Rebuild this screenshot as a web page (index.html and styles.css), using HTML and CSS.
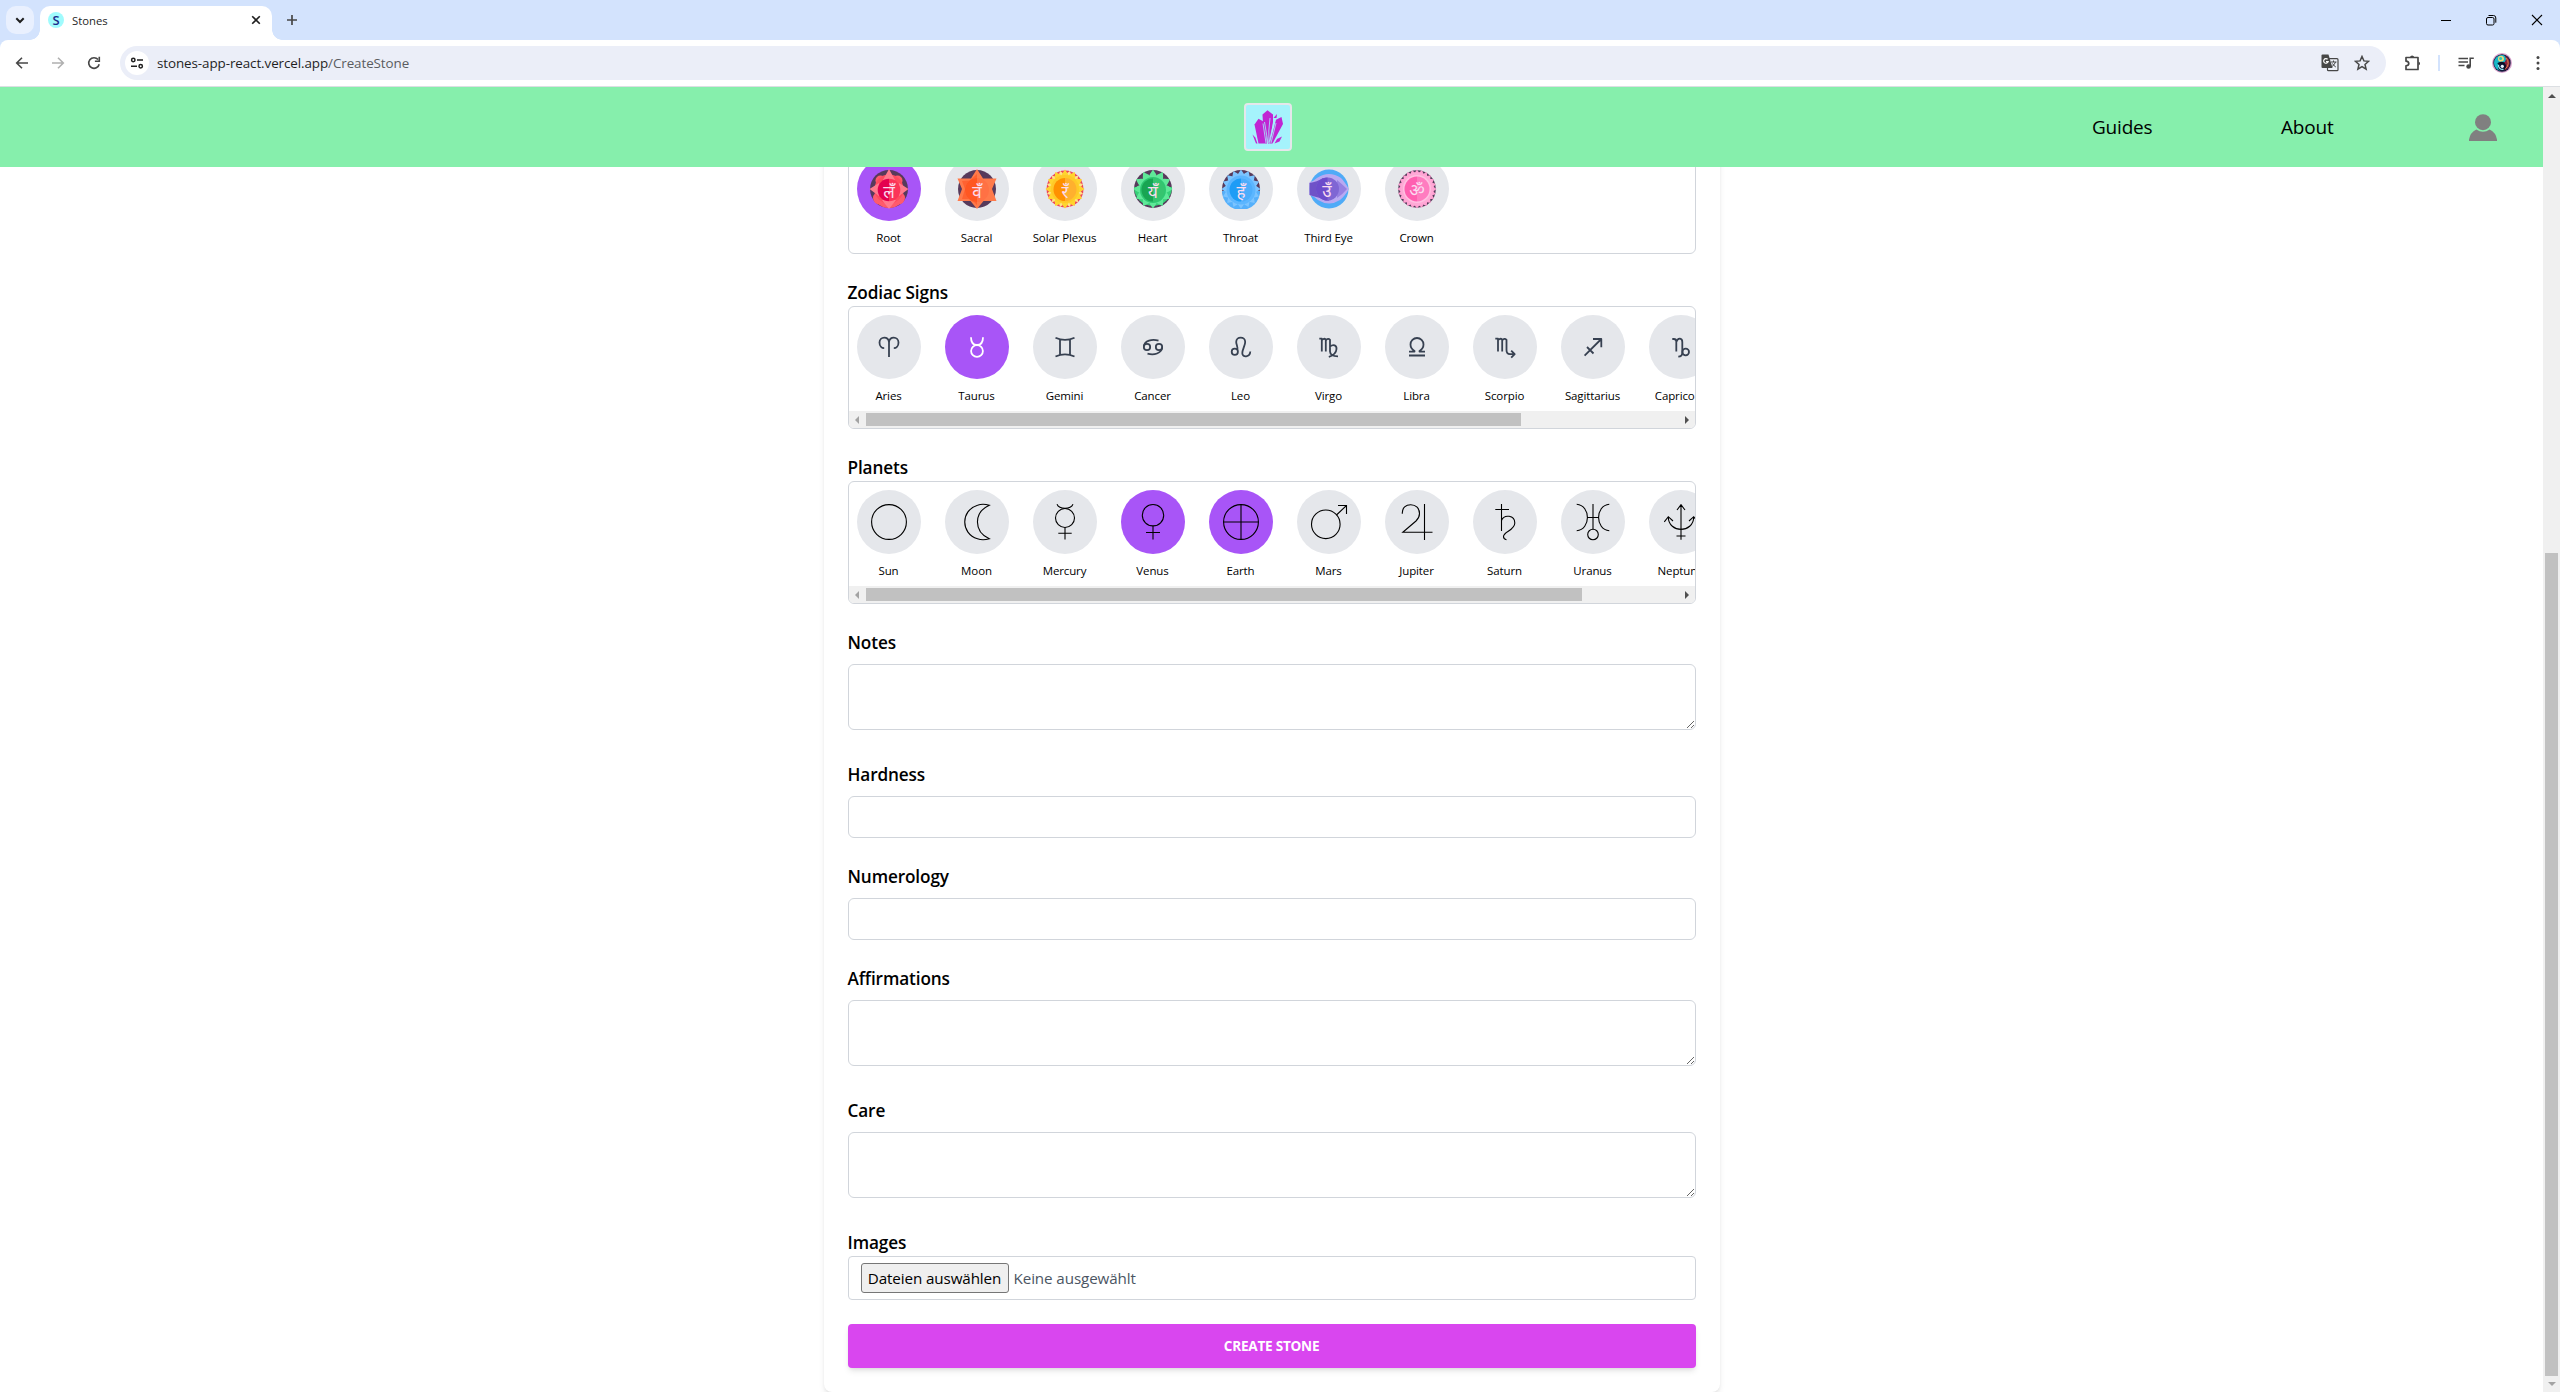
FILE: index.html
```html
<!DOCTYPE html>
<html lang="en">
<head>
<meta charset="utf-8">
<title>Stones</title>
<link rel="stylesheet" href="styles.css">
</head>
<body>
<svg class="defs" aria-hidden="true">
  <defs>
    <path id="petal" d="M20 0.400C22 3.500 24.200 5.500 24.200 9.500L20 20L15.800 9.500C15.800 5.500 18 3.500 20 0.400Z"/>
    <g id="ring4"><use href="#petal"/><use href="#petal" transform="rotate(90 20 20)"/><use href="#petal" transform="rotate(180 20 20)"/><use href="#petal" transform="rotate(270 20 20)"/></g>
    <g id="ring12"><use href="#ring4"/><use href="#ring4" transform="rotate(30 20 20)"/><use href="#ring4" transform="rotate(60 20 20)"/></g>
    <g id="ring16"><use href="#ring4"/><use href="#ring4" transform="rotate(22.5 20 20)"/><use href="#ring4" transform="rotate(45 20 20)"/><use href="#ring4" transform="rotate(67.5 20 20)"/></g>
  </defs>
</svg>

<div class="tabstrip">
  <div class="tab-search"><svg width="28" height="28" viewBox="0 0 28 28"><path d="M10.300 12.300L14 16L17.700 12.300" fill="none" stroke="#1f1f1f" stroke-width="2"/></svg></div>
  <div class="tab">
    <span class="favicon">S</span>
    <span class="tab-title">Stones</span>
    <svg width="10" height="10" viewBox="0 0 10 10"><path d="M1.200 1.200L8.800 8.800M8.800 1.200L1.200 8.800" stroke="#1f1f1f" stroke-width="1.600"/></svg>
  </div>
  <svg class="plus" width="12" height="12" viewBox="0 0 12 12"><path d="M6 1V11M1 6H11" stroke="#474747" stroke-width="1.700"/></svg>
  <div class="window-buttons">
    <svg width="10" height="12" viewBox="0 0 10 12"><path d="M0 6.500H10" stroke="#000"/></svg>
    <svg width="12" height="12" viewBox="0 0 12 12"><rect x="1.500" y="3.500" width="7.500" height="7.500" rx="1.500" fill="none" stroke="#000"/><path d="M3.500 1.500H8.500Q10.800 1.500 10.800 4V8.700" fill="none" stroke="#000"/></svg>
    <svg width="12" height="12" viewBox="0 0 12 12"><path d="M1 1L11 11M11 1L1 11" stroke="#000" stroke-width="1.100"/></svg>
  </div>
</div>

<div class="toolbar-back"><div class="toolbar">
  <svg width="16" height="16" viewBox="0 0 16 16"><path d="M14 8H3M8 2.700L2.700 8L8 13.300" fill="none" stroke="#474747" stroke-width="1.600"/></svg>
  <svg width="16" height="16" viewBox="0 0 16 16"><path d="M2 8H13M8 2.700L13.300 8L8 13.300" fill="none" stroke="#b0b0b0" stroke-width="1.600"/></svg>
  <svg width="16" height="16" viewBox="0 0 16 16"><path d="M13.200 9.200A5.300 5.300 0 1 1 12.100 4.600" fill="none" stroke="#474747" stroke-width="1.600"/><path d="M13.300 1.800V6.200H8.900" fill="none" stroke="#474747" stroke-width="1.600"/></svg>
  <div class="omnibox">
    <span class="site-info"><svg width="14" height="14" viewBox="0 0 14 14"><g fill="none" stroke="#1f1f1f" stroke-width="1.500"><circle cx="3.300" cy="4" r="1.700"/><path d="M7 4H13M1 10.200H7"/><circle cx="10.700" cy="10.200" r="1.700"/></g></svg></span>
    <span class="url">stones-app-react.vercel.app<span class="url-path">/CreateStone</span></span>
    <svg class="translate" width="18" height="18" viewBox="0 0 18 18"><rect x="6.500" y="4.700" width="10.500" height="12" rx="1" fill="#eef0f8" stroke="#474747" stroke-width="1.200"/><path d="M1.500 0.500H7.500L11.500 14H1.500Q0.500 14 0.500 13V1.500Q0.500 0.500 1.500 0.500Z" fill="#474747"/><path d="M6.600 5.300A2.300 2.300 0 1 0 7.200 7.600H5" fill="none" stroke="#fff" stroke-width="1.200"/><path d="M10 8H15.500M12.500 6.500V8M14.500 8Q13.500 11 11 12.500M11.500 9.500Q12.500 11.500 14.800 13" fill="none" stroke="#474747"/></svg>
    <svg width="16" height="16" viewBox="0 0 16 16"><path d="M8 1.500L9.900 5.900L14.600 6.300L11 9.400L12.100 14.100L8 11.600L3.900 14.100L5 9.400L1.400 6.300L6.100 5.900Z" fill="none" stroke="#474747" stroke-width="1.500"/></svg>
  </div>
  <div class="actions">
    <svg class="puzzle" width="18" height="18" viewBox="0 0 18 18"><path d="M2 3.500H14V15.500H2V11.800C5.700 11.500 5.700 7.500 2 7.200Z" fill="none" stroke="#474747" stroke-width="1.700" stroke-linejoin="round"/><path d="M6 3A2.200 2.200 0 0 1 10.200 3ZM14.500 7.400A2.200 2.200 0 0 1 14.500 11.600Z" fill="#474747"/></svg>
    <span class="divider"></span>
    <svg class="media" width="16" height="14" viewBox="0 0 16 14"><path d="M0.500 2.500H10M0.500 6H10M0.500 9.500H6.500" stroke="#474747" stroke-width="1.500"/><path d="M12.200 10V2.200H15.800" fill="none" stroke="#474747" stroke-width="1.600"/><circle cx="10.600" cy="10.500" r="2.300" fill="#474747"/></svg>
    <svg class="avatar" width="20" height="20" viewBox="0 0 20 20"><circle cx="10" cy="10" r="10" fill="#d9a3cd"/><circle cx="10" cy="10" r="8.700" fill="#111a3a"/><path d="M10 2A8 8 0 0 0 10 18A4 4 0 0 1 10 10A4 4 0 0 0 10 2Z" fill="#18b7c8"/><path d="M12 2.500A7.800 7.800 0 0 1 12 17.500A4.500 4.500 0 0 0 10 10A4 4 0 0 0 12 2.500Z" fill="#8c1f3c"/><path d="M14 5A7 7 0 0 1 13 16" fill="none" stroke="#e08a4a" stroke-width="1"/><circle cx="9" cy="5.700" r="3" fill="#e5dc7b"/><circle cx="8.600" cy="5.500" r="1.500" fill="#2ec5b5"/><path d="M6 11Q8 9 11 10Q14.500 12 12 16" fill="none" stroke="#0b1026" stroke-width="2"/><circle cx="10.300" cy="13.300" r="1.600" fill="#e8f6ff"/><path d="M6.500 12A4 4 0 0 0 11.500 16.300" fill="none" stroke="#8feaf2" stroke-width="1.200"/></svg>
    <svg class="dots" width="4" height="16" viewBox="0 0 4 16"><g fill="#474747"><circle cx="2" cy="2.500" r="1.500"/><circle cx="2" cy="8" r="1.500"/><circle cx="2" cy="13.500" r="1.500"/></g></svg>
  </div>
</div></div>

<div class="viewport">
  <div class="page">
    <header class="site-header">
      <div class="logo"><svg width="44" height="44" viewBox="0 0 44 44"><g fill="#c026d3"><path d="M16.500 9.500L21.500 5.300L27 9.500V17L23.500 38.500H22L17 18Z"/><path d="M8.500 19.500L12.500 13.800L18.300 17L21 38.500H12.500Z"/><path d="M30 14.800L35.500 12L37 19L26.500 38.500H23.800Z"/><path d="M6.500 29.500L9.300 32.500L11.500 38.500H10Z"/><path d="M28.500 38.500L31 34L36 31.500L33.500 36.500Z"/><path d="M27.500 13L31 9L30.500 13Z"/></g><path d="M18.500 17L22 38M24 13L22.800 26L23 38M17 18.500L20 38M30 18L25 38M27.800 17.500L23.200 37" stroke="#a5f3fc" stroke-width=".8" fill="none"/></svg></div>
      <nav class="nav">
        <a class="link-guides">Guides</a>
        <a class="link-about">About</a>
        <svg width="28" height="27" viewBox="0 0 28 27"><circle cx="14" cy="8.200" r="8" fill="#808080"/><path d="M7.300 15.500Q14 20 20.700 15.500Q26.800 18.500 28 25.500V27H0V25.500Q1.200 18.500 7.300 15.500Z" fill="#808080"/></svg>
      </nav>
    </header>

    <main class="content">
      <form class="card">
        <div class="field">
          <div class="picker">
            <div class="items">
              <div class="item"><span class="disc on"><svg width="40" height="40" viewBox="0 0 40 40"><circle cx="20" cy="20" r="19" fill="#573a5b"/><g fill="#ff5a6c"><circle cx="11.500" cy="11.500" r="5"/><circle cx="28.500" cy="11.500" r="5"/><circle cx="10.500" cy="29" r="6.500"/><circle cx="29.500" cy="29" r="6.500"/><path d="M8 33H32V34Q27 39 20 39T8 34Z"/><circle cx="20" cy="20" r="14.500" fill="#ff4a5e"/></g><g fill="#ff7a8c"><path d="M20 0L26 11L20 18L14 11Z"/><path d="M0.500 20L10 14V27ZM39.500 20L30 14V27ZM20 40L13 31H27Z"/></g><path d="M20 9.700A11.300 11.300 0 0 0 20 32.300Z" fill="#e4004f"/><path d="M20 9.700A11.300 11.300 0 0 1 20 32.300Z" fill="#fb3458"/><text class="bija" x="20" y="29">लँ</text></svg></span><span class="name">Root</span></div>
              <div class="item"><span class="disc"><svg width="40" height="40" viewBox="0 0 40 40"><circle cx="20" cy="20" r="19" fill="#573a5b"/><path d="M20 0L26 9.500H39.500L35 20L39.500 32H26.500L20 40L13.500 32H0.500L5 20L0.500 9.500H14Z" fill="#ff7a4a"/><path d="M20 5L13 11.500L5 12L8 20L5 30L14 30L20 36Z" fill="#ff6231"/><circle cx="20" cy="21" r="12" fill="#ff7144"/><path d="M20 9A12 12 0 0 0 20 33Z" fill="#ff5722"/><text class="bija" x="20" y="29">वँ</text></svg></span><span class="name">Sacral</span></div>
              <div class="item"><span class="disc"><svg width="40" height="40" viewBox="0 0 40 40"><circle cx="20" cy="20" r="18.500" fill="#ee4458"/><use href="#ring12" fill="#ffe38a" transform="rotate(15 20 20) translate(1 1) scale(.95)"/><use href="#ring12" fill="#ffd42e"/><circle cx="20" cy="20" r="14" fill="#ffc928"/><path d="M20 9A11.500 11.500 0 0 0 20 32Z" fill="#ff9100"/><path d="M20 9A11.500 11.500 0 0 1 20 32Z" fill="#ffb02e"/><text class="bija" x="20" y="29">रँ</text></svg></span><span class="name">Solar Plexus</span></div>
              <div class="item"><span class="disc"><svg width="40" height="40" viewBox="0 0 40 40"><circle cx="20" cy="20" r="19" fill="#573a5b"/><path d="M1 18A19 19 0 0 0 39 18Z" fill="#37cf78"/><use href="#ring12" fill="#5fe898"/><circle cx="20" cy="21" r="13" fill="#2fc772"/><path d="M20 9.500A11.500 11.500 0 0 0 20 32.500Z" fill="#18a552"/><path d="M20 9.500A11.500 11.500 0 0 1 20 32.500Z" fill="#36c46f"/><text class="bija" x="20" y="29">यँ</text></svg></span><span class="name">Heart</span></div>
              <div class="item"><span class="disc"><svg width="40" height="40" viewBox="0 0 40 40"><circle cx="20" cy="20" r="19" fill="#573a5b"/><path d="M1 22A19 19 0 0 0 39 22Z" fill="#55b0fb"/><use href="#ring16" fill="#7cc4ff"/><circle cx="20" cy="21" r="14.500" fill="#5cb6ff"/><path d="M20 9.500A11.500 11.500 0 0 0 20 32.500Z" fill="#1e9cf6"/><path d="M20 9.500A11.500 11.500 0 0 1 20 32.500Z" fill="#4dadfb"/><text class="bija" x="20" y="29">हँ</text></svg></span><span class="name">Throat</span></div>
              <div class="item"><span class="disc"><svg width="40" height="40" viewBox="0 0 40 40"><circle cx="20" cy="20" r="19.500" fill="#4fabf7"/><path d="M8 9Q20 1 32 9Q35 12 40 20Q35 28 31 31Q20 38 9 31Q5 27 0.500 26V13Q5 12 8 9Z" fill="#b9a9f2"/><path d="M0.500 14Q8 13 14 9L20 32Q8 28 0.500 26Z" fill="#6f52c8"/><path d="M28 11Q33 15 38 20Q33 26 28 29Z" fill="#9680e2"/><circle cx="18.500" cy="20" r="11.500" fill="#7f66d4"/><path d="M18.500 8.500A11.500 11.500 0 0 0 18.500 31.500Z" fill="#6c4ccb"/><text class="bija" x="18" y="28">उँ</text></svg></span><span class="name">Third Eye</span></div>
              <div class="item"><span class="disc"><svg width="40" height="40" viewBox="0 0 40 40"><circle cx="20" cy="20" r="18.800" fill="#573a5b"/><g fill="#ff9fd0"><use href="#ring12"/><use href="#ring12" transform="rotate(15 20 20)"/></g><circle cx="20" cy="20" r="16.500" fill="#ffa9d6"/><circle cx="20" cy="20" r="14" fill="#ffc0e1"/><path d="M20 7.500A12.500 12.500 0 0 0 20 32.500Z" fill="#ff60b0"/><path d="M20 7.500A12.500 12.500 0 0 1 20 32.500Z" fill="#ff7cc0"/><text class="bija" x="20" y="27">ॐ</text></svg></span><span class="name">Crown</span></div>
            </div>
          </div>
        </div>

        <div class="field">
          <label class="label">Zodiac Signs</label>
          <div class="picker">
            <div class="items zodiac">
              <div class="item"><span class="disc"><svg viewBox="0 0 64 64"><path d="M32 42V27.500C32 20.800 22.500 21 22.500 27.500C22.500 31 24.700 33.200 27.200 33.200M32 27.500C32 20.800 41.500 21 41.500 27.500C41.500 31 39.300 33.200 36.800 33.200"/></svg></span><span class="name">Aries</span></div>
              <div class="item"><span class="disc on"><svg viewBox="0 0 64 64"><circle cx="32" cy="36" r="5.900"/><path d="M26 22.200C26 27.200 28.500 30 32 30S38 27.200 38 22.200"/></svg></span><span class="name">Taurus</span></div>
              <div class="item"><span class="disc"><svg viewBox="0 0 64 64"><path d="M22.500 22.800Q32 27 41.500 22.800M22.500 41.500Q32 37.300 41.500 41.500M27 24.500V39.800M37 24.500V39.800"/></svg></span><span class="name">Gemini</span></div>
              <div class="item"><span class="disc"><svg viewBox="0 0 64 64"><circle cx="26" cy="32" r="3.200"/><circle cx="38" cy="32" r="3.200"/><path d="M22.800 31.500C23.500 25.500 31 23.800 37.500 25.600M41.200 32.500C40.500 38.500 33 40.400 26.500 38.600"/></svg></span><span class="name">Cancer</span></div>
              <div class="item"><span class="disc"><svg viewBox="0 0 64 64"><circle cx="25.800" cy="36.800" r="3.100"/><path d="M28.300 34.800C29.300 32.500 27.200 29.500 27.200 27C27.200 21.200 36.200 21.200 36.200 27C36.200 30.500 33.300 34.500 33.300 38.200C33.300 42.800 41 42.500 41.300 36.500"/></svg></span><span class="name">Leo</span></div>
              <div class="item"><span class="disc"><svg viewBox="0 0 64 64"><path d="M22.300 23.700H24.800V36.500M24.800 25.300Q27 22.600 28.800 24.600V36.500M28.800 25.300Q31.200 22.600 33 24.800V36.500Q33.200 41.300 41 41.300M33 31.500C36.500 28.800 39.800 30.500 39.500 34C39.200 38 35.500 40.800 31.800 41.800"/></svg></span><span class="name">Virgo</span></div>
              <div class="item"><span class="disc"><svg viewBox="0 0 64 64"><path d="M24 40.500H40M24 36.600H29.500V36C27 34.500 25.500 32.200 25.500 29.500A6.500 6.500 0 0 1 38.500 29.500C38.500 32.200 37 34.500 34.500 36V36.600H40"/></svg></span><span class="name">Libra</span></div>
              <div class="item"><span class="disc"><svg viewBox="0 0 64 64"><path d="M22.300 23.700H25V36.500M25 25.300Q27.200 22.600 29.200 24.600V36.500M29.200 25.300Q31.500 22.600 33.500 24.800V35Q33.500 39.200 37 39.200H41.500M38.200 35.700L41.700 39.200L38.200 42.700"/></svg></span><span class="name">Scorpio</span></div>
              <div class="item"><span class="disc"><svg viewBox="0 0 64 64"><path d="M23.600 40.700L40.300 24M32 24H40.300V32.300M26 32L32.500 38.500"/></svg></span><span class="name">Sagittarius</span></div>
              <div class="item"><span class="disc"><svg viewBox="0 0 64 64"><path d="M23.300 24H24.800Q27.300 24 27.300 26.500V36.500M27.300 27Q28.500 23.500 31 23.700Q33.300 24 33.300 27V37.500Q33.300 41.500 29.300 41.700"/><circle cx="36.700" cy="37" r="3.300"/></svg></span><span class="name">Capricorn</span></div>
            </div>
            <div class="hscroll"><i class="arrow left"></i><i class="thumb" style="width:655px"></i><i class="arrow right"></i></div>
          </div>
        </div>

        <div class="field">
          <label class="label">Planets</label>
          <div class="picker">
            <div class="items planets">
              <div class="item"><span class="disc"><svg viewBox="0 0 64 64"><circle cx="32" cy="32" r="17.400"/></svg></span><span class="name">Sun</span></div>
              <div class="item"><span class="disc"><svg viewBox="0 0 64 64"><path d="M44.300 15.200C40 14 35 14.300 32.500 15.200C15.500 20.500 15.500 43.500 32.500 48.800C35 49.700 40 50 44.300 48.800C28.500 41.500 28.500 22.500 44.300 15.200Z"/></svg></span><span class="name">Moon</span></div>
              <div class="item"><span class="disc"><svg viewBox="0 0 64 64"><circle cx="32" cy="28" r="9.500"/><path d="M24 14.300C26.500 19.700 37.500 19.700 40 14.300M32 37.500V49.500M25.300 43.300H38.700"/></svg></span><span class="name">Mercury</span></div>
              <div class="item"><span class="disc on"><svg viewBox="0 0 64 64"><circle cx="32" cy="25.200" r="10.700"/><path d="M32 36V49.500M25 42.500H39"/></svg></span><span class="name">Venus</span></div>
              <div class="item"><span class="disc on"><svg viewBox="0 0 64 64"><circle cx="32" cy="32" r="17.400"/><path d="M32 14.500V49.500M14.500 32H49.500"/></svg></span><span class="name">Earth</span></div>
              <div class="item"><span class="disc"><svg viewBox="0 0 64 64"><circle cx="28.800" cy="34.300" r="14.300"/><path d="M39.500 25L49.500 15.500M41 15.500H49.500V24"/></svg></span><span class="name">Mars</span></div>
              <div class="item"><span class="disc"><svg viewBox="0 0 64 64"><path d="M17.300 23.800C17 17.500 21 14.700 25.700 14.700C31 14.700 34.500 18.500 34.500 23.500C34.500 27 33.300 28.800 31 31L17.800 42.300H47.500M39.500 14V50"/></svg></span><span class="name">Jupiter</span></div>
              <div class="item"><span class="disc"><svg viewBox="0 0 64 64"><path d="M28.500 14V41M22.300 19.500H36M28.500 30.500C31 24 41.800 25 41.800 33C41.800 40.500 30.500 41.500 30.500 46.500C30.500 48.300 31.800 49.500 33.500 49.700"/></svg></span><span class="name">Saturn</span></div>
              <div class="item"><span class="disc"><svg viewBox="0 0 64 64"><path d="M15.700 14.300C30 15.500 30 39.500 15.700 40.700M48.300 14.300C34 15.500 34 39.500 48.300 40.700M32 14V39M26.500 27.500H37.500"/><circle cx="32" cy="44.500" r="5.300"/></svg></span><span class="name">Uranus</span></div>
              <div class="item"><span class="disc"><svg viewBox="0 0 64 64"><path d="M32 14.700V49.700M28 20L32 14.700L36 20M19.300 27C19.500 43.500 44.500 43.500 44.700 27M15.300 31.800L19.300 26.700L24 31M48.700 31.800L44.700 26.700L40 31M27.500 46H36.500"/></svg></span><span class="name">Neptune</span></div>
            </div>
            <div class="hscroll"><i class="arrow left"></i><i class="thumb" style="width:716px"></i><i class="arrow right"></i></div>
          </div>
        </div>

        <div class="field area"><label class="label">Notes</label><textarea class="control"></textarea></div>
        <div class="field"><label class="label">Hardness</label><input class="control" type="text"></div>
        <div class="field"><label class="label">Numerology</label><input class="control" type="text"></div>
        <div class="field area"><label class="label">Affirmations</label><textarea class="control"></textarea></div>
        <div class="field area"><label class="label">Care</label><textarea class="control"></textarea></div>
        <div class="field">
          <label class="label">Images</label>
          <div class="file"><span class="file-button">Dateien auswählen</span><span class="file-state">Keine ausgewählt</span></div>
        </div>
        <button class="submit" type="button">Create Stone</button>
      </form>
    </main>
  </div>
  <div class="vscroll"><i class="arrow up"></i><i class="vthumb"></i><i class="arrow down"></i></div>
</div>
</body>
</html>
```

FILE: styles.css
```css
* { box-sizing: border-box; }
html, body { margin: 0; height: 100%; }
body {
  width: 2560px;
  height: 1392px;
  overflow: hidden;
  display: flex;
  flex-direction: column;
  background: #fff;
  color: #000;
  font-family: "Open Sans", "Noto Sans", sans-serif;
}
svg { display: block; flex: none; }
.defs { position: absolute; width: 0; height: 0; }

/* Browser tab strip */
.tabstrip {
  height: 40px;
  flex: none;
  background: #d3e3fd;
  display: flex;
  align-items: center;
  padding: 0 17px 0 6px;
}
.tab-search { width: 28px; height: 28px; border-radius: 10px; background: #e9f0fe; }
.tab {
  position: relative;
  width: 232px;
  height: 34px;
  margin-left: 6px;
  align-self: flex-end;
  padding: 0 11px 6px 8px;
  display: flex;
  align-items: center;
  background: #fff;
  border-radius: 10px 10px 0 0;
}
.tab::before, .tab::after {
  content: "";
  position: absolute;
  bottom: 0;
  width: 10px;
  height: 10px;
}
.tab::before { left: -10px; background: radial-gradient(circle at 0 0, transparent 9.5px, #fff 10px); }
.tab::after { right: -10px; background: radial-gradient(circle at 100% 0, transparent 9.5px, #fff 10px); }
.favicon {
  width: 16px;
  height: 16px;
  border-radius: 50%;
  background: #a0fbfd;
  color: #1d2a8c;
  font-size: 13px;
  font-weight: 600;
  line-height: 16px;
  text-align: center;
}
.tab-title { flex: 1; margin-left: 8px; padding-top: 1px; font-size: 11.3px; line-height: 16px; color: #1f1f1f; }
.plus { margin-left: 14px; }
.window-buttons { margin-left: auto; display: flex; gap: 34px; }

/* Browser toolbar */
.toolbar-back { height: 47px; flex: none; background: #d3e3fd; }
.toolbar {
  height: 47px;
  display: flex;
  align-items: center;
  gap: 20px;
  padding: 0 20px 1px 14px;
  background: #fff;
  border-bottom: 1px solid #dcdfe3;
  border-radius: 8px 8px 0 0;
}
.omnibox {
  width: 2266px;
  height: 34px;
  flex: none;
  margin-left: -2px;
  border-radius: 17px;
  background: #ebeef8;
  display: flex;
  align-items: center;
  padding: 0 16px 0 5px;
}
.site-info {
  width: 24px;
  height: 24px;
  border-radius: 50%;
  background: #fff;
  display: grid;
  place-items: center;
}
.url { flex: 1; margin-left: 8px; font-size: 13.4px; letter-spacing: -.08px; line-height: 20px; color: #1f1f1f; }
.url-path { color: #5a5c60; }
.translate { margin-right: 15px; }
.actions { display: flex; flex: none; align-items: center; }
.puzzle { margin-left: -2px; }
.divider { width: 2px; height: 16px; margin-left: 16px; background: #d3e3fd; }
.media { margin-left: 18px; }
.avatar { margin-left: 18px; }
.dots { margin-left: 24px; }

/* Page viewport */
.viewport { flex: 1; min-height: 0; display: flex; }
.page { flex: 1; min-width: 0; display: flex; flex-direction: column; }
.vscroll {
  width: 17px;
  background: #f0f0f0;
  display: flex;
  flex-direction: column;
  align-items: center;
  justify-content: space-between;
  padding: 7px 0 6px;
}
.vthumb { width: 13px; height: 823px; margin-top: 448px; background: #c1c1c1; }
.arrow { width: 0; height: 0; border: 4px solid transparent; }
.arrow.up { border-top: 0; border-bottom-color: #505050; }
.arrow.down { border-bottom: 0; border-top-color: #a3a3a3; }
.arrow.left { border-left: 0; border-right-color: #a3a3a3; margin: 0 7px 0 6px; }
.arrow.right { border-right: 0; border-left-color: #505050; margin: 0 6px 0 auto; }

.site-header {
  height: 80px;
  flex: none;
  background: #86efac;
  display: grid;
  grid-template-columns: 48px 1fr;
  align-items: center;
  padding: 0 46px 0 1244px;
}
.logo {
  width: 48px;
  height: 48px;
  border: 2px solid #e5e7eb;
  border-radius: 4px;
  background: #a5f3fc;
}
.nav { display: flex; justify-content: flex-end; align-items: center; font-size: 19px; letter-spacing: -.2px; line-height: 28px; }
.nav a { white-space: nowrap; }
.link-guides { width: 60px; margin-right: 129px; }
.link-about { width: 54px; margin-right: 134px; }

/* The form is scrolled down to its end */
.content {
  flex: 1;
  min-height: 0;
  overflow: hidden;
  display: flex;
  flex-direction: column;
  justify-content: flex-end;
  align-items: center;
}
.card {
  width: 896px;
  flex: none;
  padding: 24px;
  border-radius: 8px;
  background: #fff;
  box-shadow: 0 4px 6px -1px rgba(0, 0, 0, .1), 0 2px 4px -2px rgba(0, 0, 0, .1);
}
.field { display: flex; flex-direction: column; margin-bottom: 24px; }
.field.area { margin-bottom: 30px; }
.label { height: 28px; padding-top: 1px; font-size: 17.2px; font-weight: 600; letter-spacing: -.12px; line-height: 28px; }
.picker { border: 1px solid #d1d5db; border-radius: 6px; overflow: hidden; }
.items { display: flex; gap: 24px; padding: 8px; }
.item { width: 64px; flex: none; display: flex; flex-direction: column; align-items: center; }
.disc {
  width: 64px;
  height: 64px;
  border-radius: 50%;
  background: #e5e7eb;
  color: #374151;
  display: grid;
  place-items: center;
}
.disc.on { background: #a855f7; color: #fff; }
.name { height: 16px; margin-top: 8px; padding-top: 1px; font-size: 11.5px; letter-spacing: -.12px; line-height: 16px; white-space: nowrap; }
.bija { font-family: "Noto Sans", "Noto Sans Devanagari", sans-serif; font-size: 17px; text-anchor: middle; fill: #fbdcf0; }
.zodiac svg, .planets svg { width: 64px; height: 64px; fill: none; }
.zodiac svg { stroke: currentColor; stroke-width: 1.8; stroke-linejoin: round; }
.planets svg { stroke: #000; stroke-width: 1.1; }
.hscroll { height: 17px; background: #f0f0f0; display: flex; align-items: center; }
.thumb { height: 13px; background: #c1c1c1; }

.control {
  display: block;
  width: 100%;
  height: 42px;
  margin: 8px 0 0;
  border: 1px solid #d1d5db;
  border-radius: 6px;
  background: #fff;
}
textarea.control { height: 66px; resize: vertical; }
.file {
  height: 44px;
  border: 1px solid #d1d5db;
  border-radius: 4px;
  padding: 0 12px;
  display: flex;
  align-items: center;
  font-size: 15.2px;
  letter-spacing: -.1px;
  white-space: nowrap;
}
.file-button {
  width: 148px;
  height: 30px;
  border: 1px solid #767676;
  border-radius: 3px;
  background: #efefef;
  line-height: 28px;
  text-align: center;
}
.file-state { margin-left: 5px; color: #4b5563; }
.submit {
  display: block;
  width: 100%;
  height: 44px;
  border: 0;
  border-radius: 4px;
  background: #d946ef;
  color: #fff;
  font: 700 13.6px/20px "Open Sans", sans-serif;
  letter-spacing: -.25px;
  text-transform: uppercase;
  box-shadow: 0 4px 6px -1px rgba(0, 0, 0, .1), 0 2px 4px -2px rgba(0, 0, 0, .1);
}
```
